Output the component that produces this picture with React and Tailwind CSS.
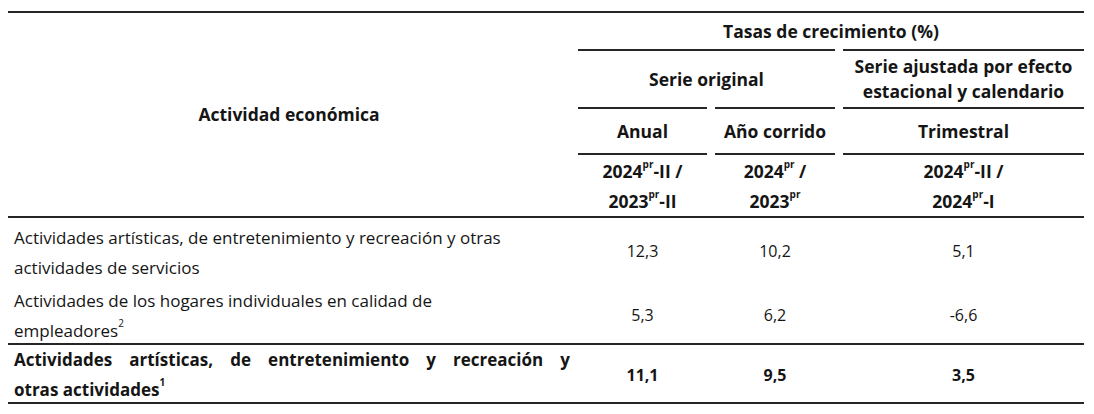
const Sup = ({ children }) => (
  <sup className="relative -top-[3px] align-super text-[10px] leading-none">{children}</sup>
);

const Head = ({ className = "", children }) => (
  <div
    className={
      "flex items-center justify-center border-t-2 border-[#262626] text-center font-bold " +
      className
    }
  >
    {children}
  </div>
);

const rows = [
  {
    label: (
      <>
        Actividades artísticas, de entretenimiento y recreación y otras
        <br />
        actividades de servicios
      </>
    ),
    values: ["12,3", "10,2", "5,1"],
    h: "h-[65px]",
    pt: "pt-[5px]",
  },
  {
    label: (
      <>
        Actividades de los hogares individuales en calidad de
        <br />
        empleadores<Sup>2</Sup>
      </>
    ),
    values: ["5,3", "6,2", "-6,6"],
    h: "h-[60px]",
    pt: "pt-[3px]",
  },
];

export default function App() {
  return (
    <div className="min-h-[414px] w-[1094px] bg-white pt-[11px] text-[#151515] [font-family:'Open_Sans',sans-serif]">
      <div className="ml-[8px] w-[1076px]">
        {/* encabezado */}
        <div className="grid grid-cols-[562px_129px_120px_241px] grid-rows-[36px_58px_46px_63px] gap-x-2 border-y-2 border-[#262626] text-[17.5px]">
          <div className="row-span-4 flex items-center justify-center font-bold">
            Actividad económica
          </div>
          <div className="col-span-3 flex items-center justify-center pt-[1px] font-bold">
            Tasas de crecimiento (%)
          </div>
          <Head className="col-span-2">Serie original</Head>
          <Head className="leading-[25px]">
            Serie ajustada por efecto
            <br />
            estacional y calendario
          </Head>
          <Head>Anual</Head>
          <Head>Año corrido</Head>
          <Head>Trimestral</Head>
          <Head className="leading-[30px]">
            <span>
              2024<Sup>pr</Sup>-II /
              <br />
              2023<Sup>pr</Sup>-II
            </span>
          </Head>
          <Head className="leading-[30px]">
            <span>
              2024<Sup>pr</Sup> /
              <br />
              2023<Sup>pr</Sup>
            </span>
          </Head>
          <Head className="leading-[30px]">
            <span>
              2024<Sup>pr</Sup>-II /
              <br />
              2024<Sup>pr</Sup>-I
            </span>
          </Head>
        </div>

        {/* filas */}
        {rows.map((r, i) => (
          <div
            key={i}
            className={"grid grid-cols-[562px_129px_120px_241px] gap-x-2 text-[16px] " + r.h}
          >
            <div className={"pl-[6px] text-[17px] leading-[30px] " + r.pt}>{r.label}</div>
            {r.values.map((v, j) => (
              <div key={j} className="flex items-center justify-center">
                {v}
              </div>
            ))}
          </div>
        ))}

        <div className="grid h-[61px] grid-cols-[562px_129px_120px_241px] gap-x-2 border-y-2 border-[#262626] text-[16px] font-bold">
          <div className="pl-[6px] text-[17px] leading-[30px]">
            <div className="text-justify [text-align-last:justify]">
              Actividades artísticas, de entretenimiento y recreación y
            </div>
            <div>
              otras actividades<Sup>1</Sup>
            </div>
          </div>
          <div className="flex items-center justify-center">11,1</div>
          <div className="flex items-center justify-center">9,5</div>
          <div className="flex items-center justify-center">3,5</div>
        </div>
      </div>
    </div>
  );
}
